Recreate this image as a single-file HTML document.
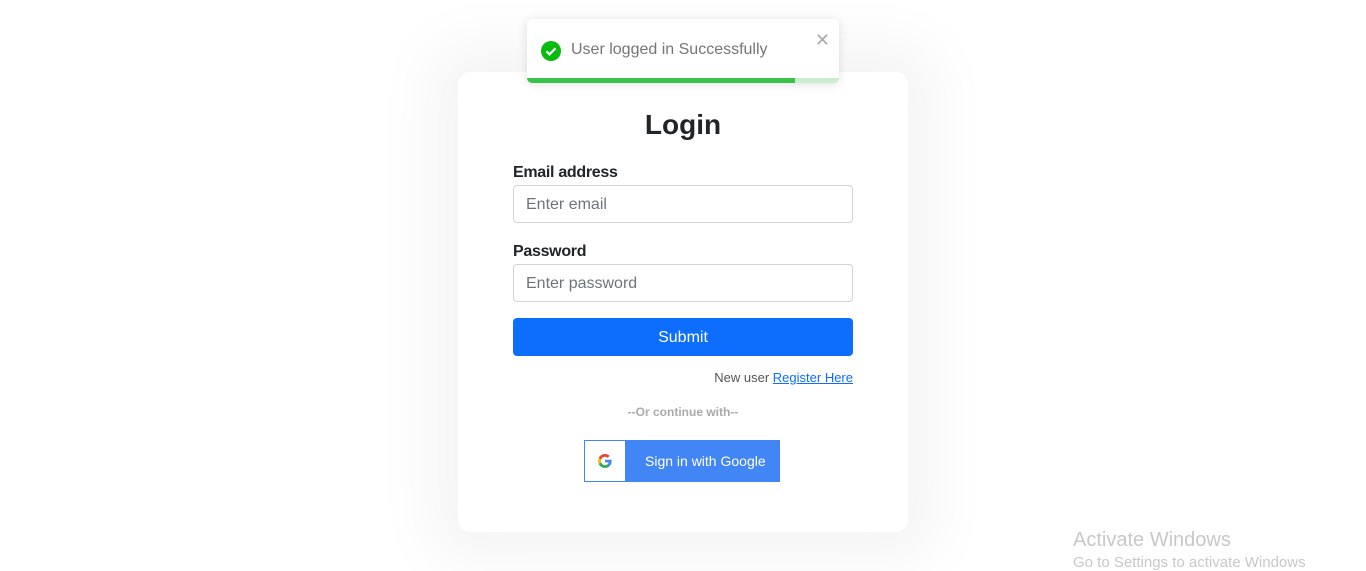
<!DOCTYPE html>
<html><head><meta charset="utf-8"><style>
*{box-sizing:border-box;margin:0;padding:0}
body{width:1366px;height:562px;background:#fff;position:relative;overflow:hidden;font-family:"Liberation Sans",sans-serif}
.card{position:absolute;left:458px;top:72px;width:450px;height:460px;background:#fff;border-radius:12px;box-shadow:0 0 60px 30px rgba(0,0,0,0.045)}
h1{position:absolute;left:0;width:450px;top:37px;text-align:center;font-size:28px;font-weight:bold;color:#212529}
.lbl{position:absolute;left:55px;font-size:16px;font-weight:bold;color:#212529;letter-spacing:-0.3px}
.inp{position:absolute;left:55px;width:340px;height:38px;border:1px solid #ced4da;border-radius:4px;padding:0 12px;line-height:38px;font-size:16px;color:#6c757d}
.btn{position:absolute;left:55px;top:246px;width:340px;height:38px;background:#0d6efd;border-radius:4px;color:#fff;text-align:center;line-height:39px;font-size:16px}
.reg{position:absolute;right:55px;top:298px;font-size:13px;color:#555}
.reg a{color:#0d6efd;text-decoration:underline}
.or{position:absolute;left:0;width:450px;text-align:center;top:333px;font-size:12px;font-weight:bold;color:#aaa}
.g{position:absolute;left:126px;top:368px;width:196px;height:42px;background:#4285f4;border:1px solid #4285f4}
.g .ic{position:absolute;left:0;top:0;width:40px;height:40px;background:#fff}
.g span{position:absolute;left:60px;top:12px;color:#fff;font-size:14px}
.toast{position:absolute;left:527px;top:19px;width:312px;height:64px;background:#fff;border-radius:5px;box-shadow:0 1px 10px rgba(0,0,0,0.12);overflow:hidden}
.toast .t{position:absolute;left:44px;top:22px;font-size:16px;color:#757575}
.toast .x{position:absolute;right:9px;top:11px;font-size:18px;color:#aaa}
.bar{position:absolute;left:0;bottom:0;height:5px;width:312px;background:#c8eecb}
.bar div{width:268px;height:5px;background:#3ac34a}
.win{position:absolute;left:1073px;top:529px;color:#c8c8c8;font-size:20px}
.win2{position:absolute;left:1073px;top:554px;color:#c8c8c8;font-size:15px}
</style></head><body>
<div class="card">
<h1>Login</h1>
<div class="lbl" style="top:92px">Email address</div>
<div class="inp" style="top:113px">Enter email</div>
<div class="lbl" style="top:171px">Password</div>
<div class="inp" style="top:192px">Enter password</div>
<div class="btn">Submit</div>
<div class="reg">New user <a>Register Here</a></div>
<div class="or">--Or continue with--</div>
<div class="g"><div class="ic"><svg width="40" height="40" viewBox="0 0 40 40"><g transform="translate(13,13) scale(0.58)">
<path d="M23.5 12.3c0-.8-.1-1.6-.2-2.3H12v4.4h6.5c-.3 1.5-1.1 2.7-2.4 3.6v3h3.8c2.3-2.1 3.6-5.2 3.600-8.7z" fill="#4285F4"/>
<path d="M12 24c3.2 0 6-1.1 7.9-2.9l-3.8-3c-1.1.7-2.4 1.2-4.1 1.2-3.1 0-5.8-2.1-6.7-5H1.3v3.1C3.3 21.3 7.3 24 12 24z" fill="#34A853"/>
<path d="M5.3 14.3c-.2-.7-.4-1.5-.4-2.3s.1-1.6.4-2.3V6.6H1.3C.5 8.2 0 10 0 12s.5 3.8 1.3 5.4l4-3.1z" fill="#FBBC05"/>
<path d="M12 4.8c1.8 0 3.3.6 4.6 1.8l3.4-3.4C18 1.2 15.2 0 12 0 7.3 0 3.3 2.7 1.3 6.6l4 3.1c.9-2.8 3.6-4.9 6.7-4.9z" fill="#EA4335"/></g></svg></div><span>Sign in with Google</span></div>
</div>
<div class="toast">
<svg style="position:absolute;left:14px;top:22px" width="20" height="20" viewBox="0 0 20 20"><circle cx="10" cy="10" r="10" fill="#07bc0c"/><path d="M5.5 10.3l3 3 6-6" stroke="#fff" stroke-width="2.2" fill="none"/></svg>
<div class="t">User logged in Successfully</div>
<div class="x">✕</div>
<div class="bar"><div></div></div>
</div>
<div class="win">Activate Windows</div>
<div class="win2">Go to Settings to activate Windows</div>
</body></html>
